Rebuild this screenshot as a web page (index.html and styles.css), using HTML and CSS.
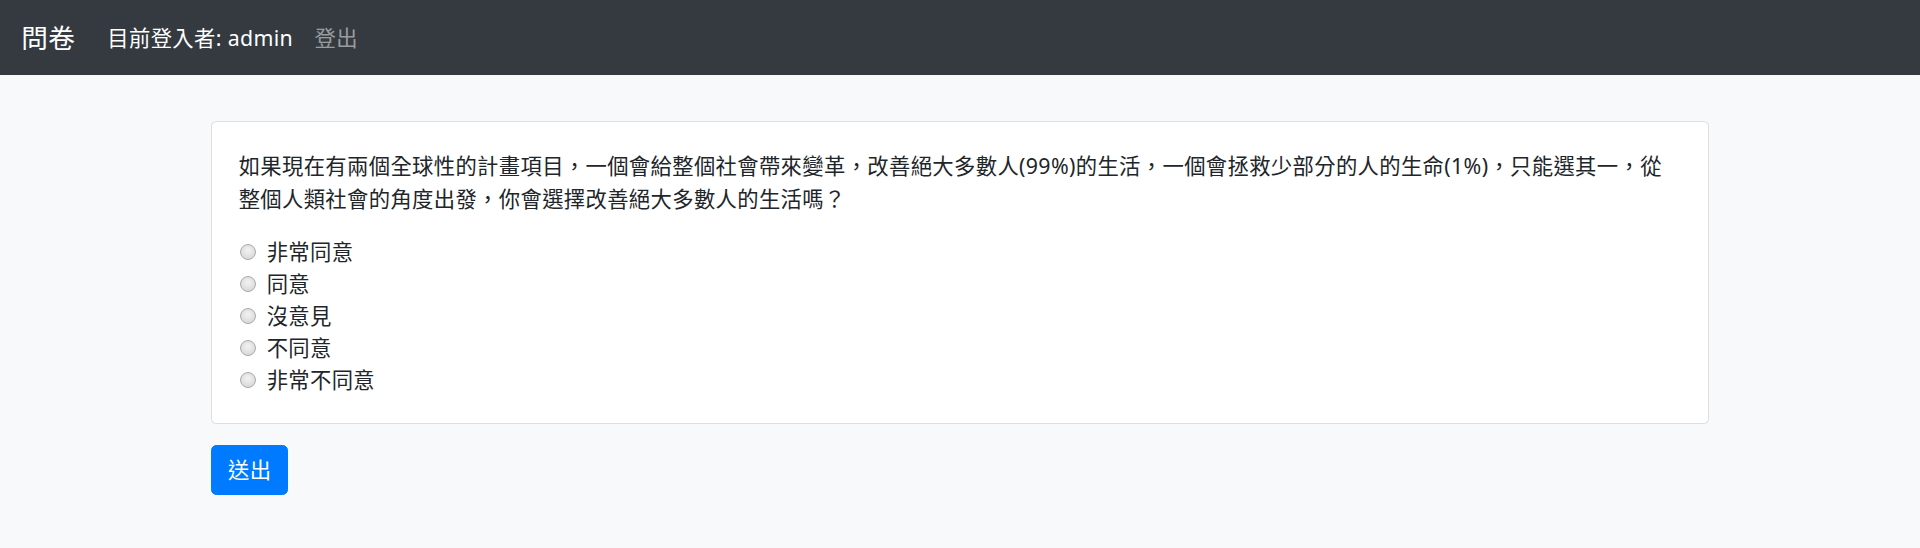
FILE: index.html
```html
<!DOCTYPE html>
<html lang="zh-Hant">
<head>
<meta charset="utf-8">
<title>問卷</title>
<link rel="stylesheet" href="styles.css">
</head>
<body>
<nav class="navbar">
  <a class="brand" href="#">問卷</a>
  <ul class="nav">
    <li><span class="nav-link active">目前登入者: admin</span></li>
    <li><a class="nav-link" href="#">登出</a></li>
  </ul>
</nav>
<main class="container">
  <form class="survey">
    <div class="card">
      <div class="card-body">
        <p class="question">如果現在有兩個全球性的計畫項目，一個會給整個社會帶來變革，改善絕大多數人(99%)的生活，一個會拯救少部分的人的生命(1%)，只能選其一，從<br>整個人類社會的角度出發，你會選擇改善絕大多數人的生活嗎？</p>
        <label class="form-check"><input type="radio" name="q1" value="5"><span>非常同意</span></label>
        <label class="form-check"><input type="radio" name="q1" value="4"><span>同意</span></label>
        <label class="form-check"><input type="radio" name="q1" value="3"><span>沒意見</span></label>
        <label class="form-check"><input type="radio" name="q1" value="2"><span>不同意</span></label>
        <label class="form-check"><input type="radio" name="q1" value="1"><span>非常不同意</span></label>
      </div>
    </div>
    <button type="button" class="btn">送出</button>
  </form>
</main>
</body>
</html>
```
FILE: styles.css
```css
* { box-sizing: border-box; }
html, body { margin: 0; padding: 0; }
body {
  background: #f8f9fa;
  color: #212529;
  font-family: "Noto Sans", "Noto Sans CJK TC", sans-serif;
  font-size: 21.33px;
  line-height: 1.5;
  letter-spacing: 0.35px;
}
.navbar {
  background: #343a40;
  height: 75px;
  padding: 0 21.33px;
  display: flex;
  align-items: center;
}
.brand {
  color: #fff;
  text-decoration: none;
  font-size: 26.67px;
  line-height: 40px;
  margin-right: 21.33px;
}
.nav {
  list-style: none;
  margin: 0;
  padding: 0;
  display: flex;
}
.nav-link {
  display: block;
  padding: 0 10.67px;
  color: rgba(255,255,255,.5);
  text-decoration: none;
  line-height: 32px;
}
.nav-link.active { color: #fff; }
.container {
  width: 1498px;
  margin: 46px auto 0;
}
.card {
  background: #fff;
  border: 1.33px solid rgba(0,0,0,.125);
  border-radius: 5.33px;
}
.card-body {
  padding: 26.67px;
}
.question {
  margin: 0 0 21.33px;
  line-height: 33px;
}
.form-check {
  display: flex;
  align-items: center;
  height: 32px;
}
.form-check input {
  -webkit-appearance: none;
  appearance: none;
  width: 16px;
  height: 16px;
  margin: 0 11px 0 1px;
  border-radius: 50%;
  border: 1px solid #a9a9a9;
  background: radial-gradient(circle at 50% 40%, #f2f2f2 0%, #dcdcdc 70%, #d0d0d0 100%);
  flex: none;
}
.btn {
  margin-top: 21.33px;
  font-family: inherit;
  font-size: 21.33px;
  letter-spacing: inherit;
  line-height: 32px;
  padding: 8px 16px;
  color: #fff;
  background: #007bff;
  border: 1.33px solid #007bff;
  border-radius: 5.33px;
  cursor: pointer;
}
```
